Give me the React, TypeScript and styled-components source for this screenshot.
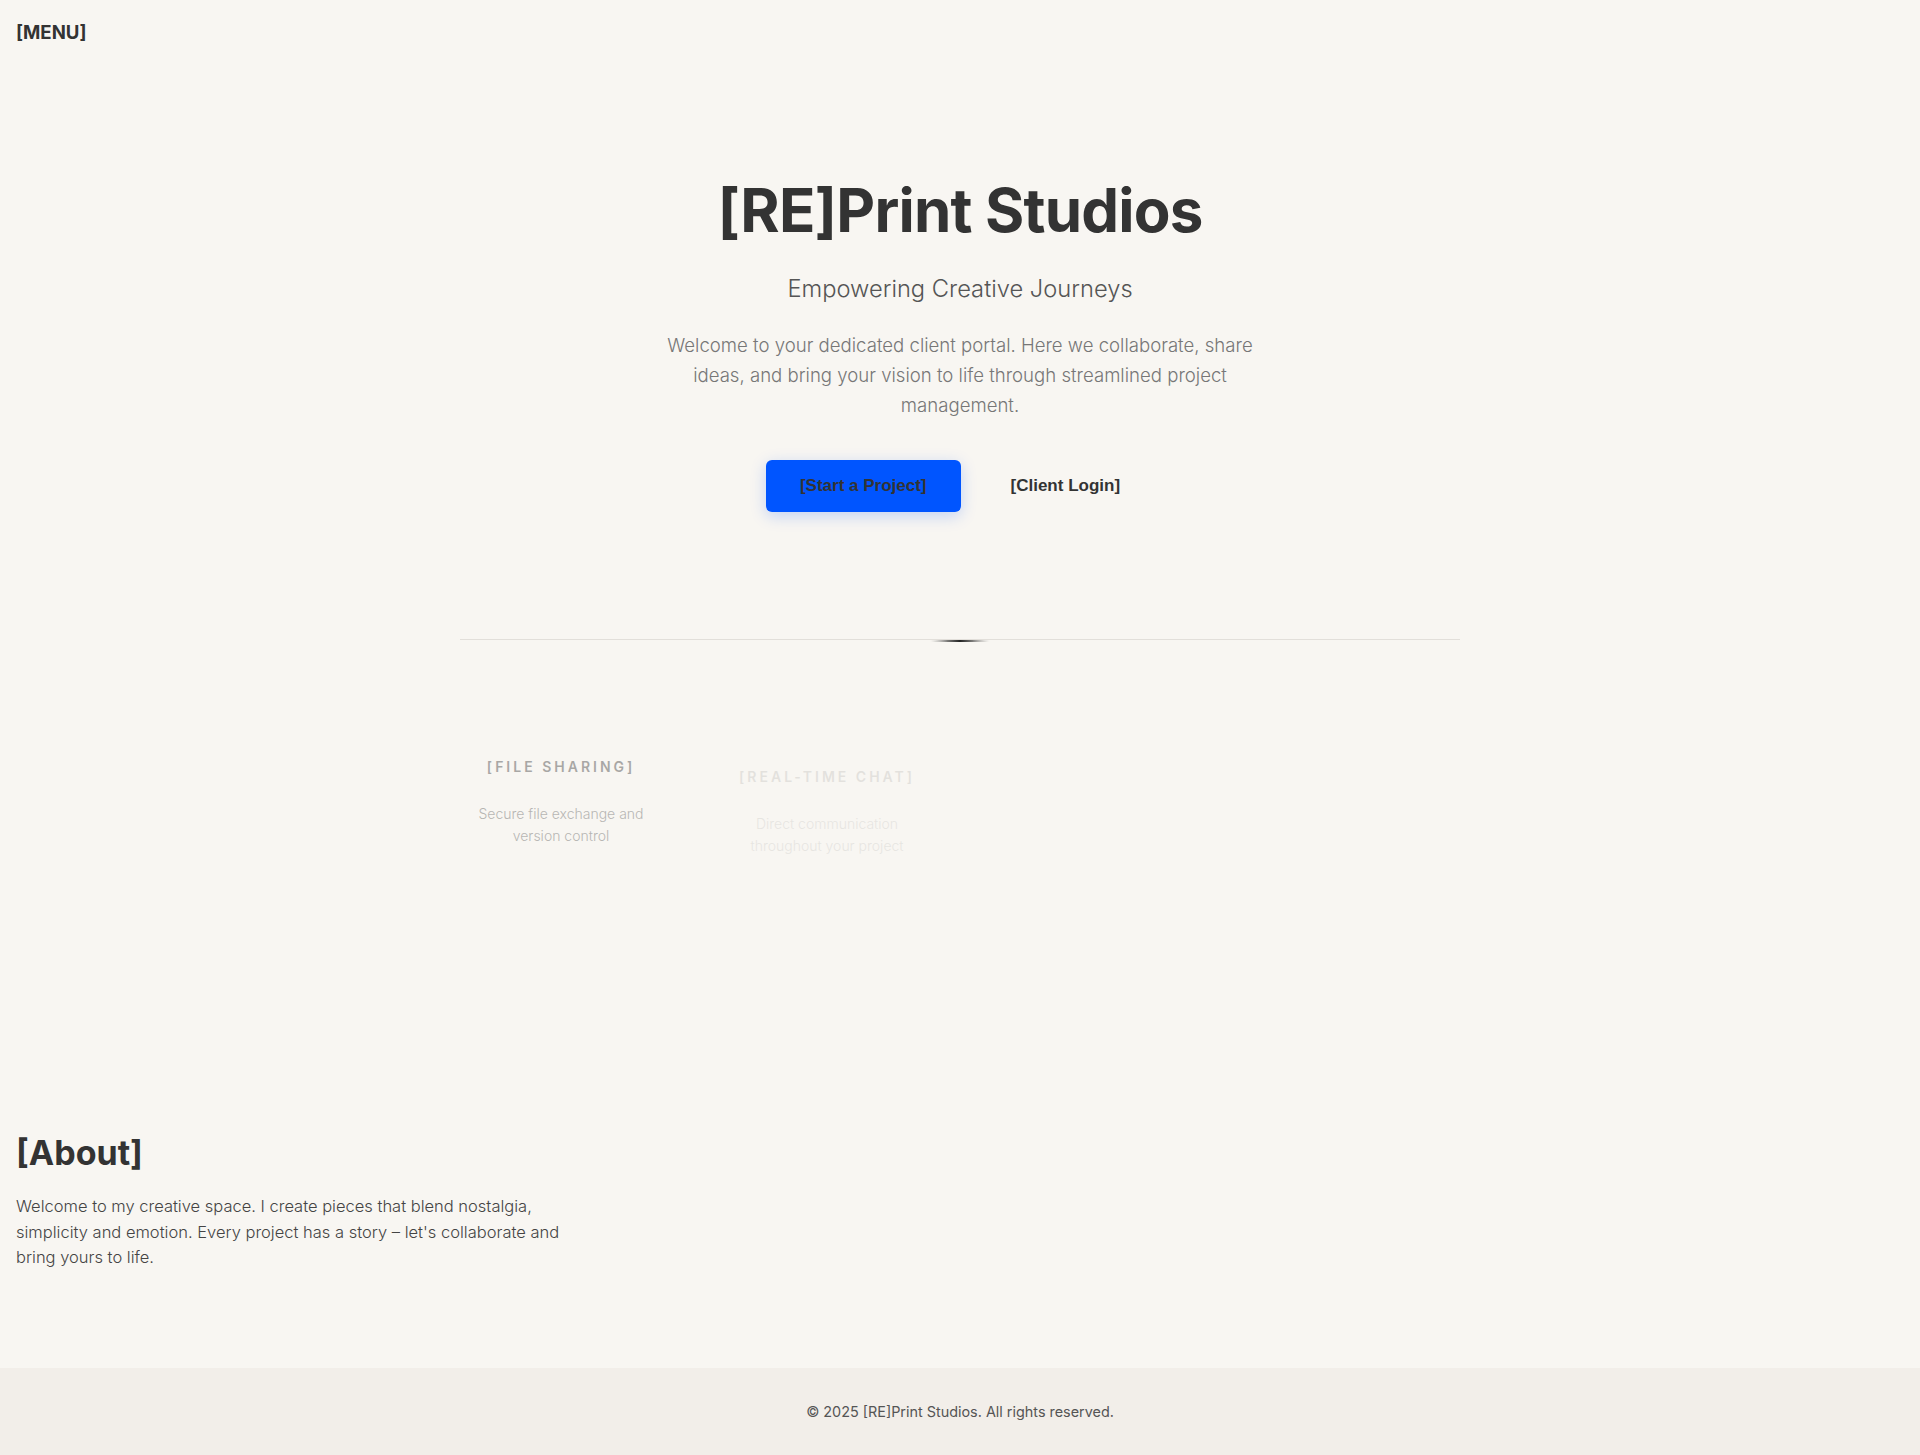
import React from "react";
import styled, { createGlobalStyle } from "styled-components";

const GlobalStyle = createGlobalStyle`
  * { box-sizing: border-box; }
  html, body { margin: 0; padding: 0; }
  body {
    background: #f8f6f2;
    color: #333;
    font-family: "Inter", "Liberation Sans", sans-serif;
  }
`;

const Page = styled.div`
  min-height: 1455px;
  display: flex;
  flex-direction: column;
`;

const Header = styled.header`
  padding: 21px 16px 19px;
  height: 62px;
`;

const MenuButton = styled.button`
  background: none;
  border: none;
  padding: 0;
  font-family: "Inter", sans-serif;
  font-weight: 700;
  font-size: 18.6px;
  line-height: 22px;
  color: #333;
  cursor: pointer;
`;

const Hero = styled.section`
  display: flex;
  flex-direction: column;
  align-items: center;
  text-align: center;
  padding-top: 112px;
`;

const Title = styled.h1`
  margin: 0;
  font-size: 60px;
  line-height: 72px;
  font-weight: 700;
  color: #333;
  letter-spacing: -0.8px;
`;

const Subtitle = styled.h2`
  margin: 27px 0 0;
  font-size: 23.7px;
  line-height: 32px;
  font-weight: 300;
  color: #555;
`;

const Lead = styled.p`
  margin: 25px 0 0;
  max-width: 600px;
  font-size: 18.6px;
  line-height: 30px;
  font-weight: 300;
  color: #777;
`;

const Actions = styled.div`
  display: flex;
  gap: 16px;
  margin-top: 40px;
`;

const ActionButton = styled.button<{ $primary?: boolean }>`
  font-family: "Liberation Sans", Arial, sans-serif;
  font-weight: 700;
  font-size: 17px;
  line-height: 20px;
  padding: 16px 34px;
  border: none;
  border-radius: 6px;
  color: #333;
  cursor: pointer;
  background: ${(p) => (p.$primary ? "#0055ff" : "transparent")};
  box-shadow: ${(p) => (p.$primary ? "0 4px 16px rgba(0, 85, 255, 0.22)" : "none")};
`;

const Divider = styled.div`
  position: relative;
  width: 1000px;
  height: 1px;
  margin: 127px auto 0;
  background: #e2dfda;

  &::after {
    content: "";
    position: absolute;
    left: 50%;
    top: 1px;
    width: 60px;
    height: 2px;
    transform: translateX(-50%);
    border-radius: 50%;
    background: linear-gradient(90deg, rgba(51, 51, 51, 0), #222 50%, rgba(51, 51, 51, 0));
  }
`;

const Features = styled.div`
  width: 1000px;
  margin: 101px auto 0;
  display: grid;
  grid-template-columns: repeat(4, 1fr);
  gap: 64px;
`;

const Feature = styled.div<{ $fade: number; $shift: number }>`
  padding: 16px 12px;
  text-align: center;
  opacity: ${(p) => p.$fade};
  transform: translateY(${(p) => p.$shift}px);
`;

const FeatureTitle = styled.h3`
  margin: 0;
  font-size: 14px;
  line-height: 20px;
  font-weight: 600;
  letter-spacing: 3px;
  text-transform: uppercase;
  color: #333;
`;

const FeatureText = styled.p`
  margin: 26px 0 0;
  font-size: 14px;
  line-height: 22px;
  font-weight: 300;
  color: #555;
`;

const About = styled.section`
  padding: 0 16px;
  margin-top: 268px;
`;

const AboutTitle = styled.h2`
  margin: 0;
  font-size: 34px;
  line-height: 43px;
  font-weight: 700;
  color: #333;
`;

const AboutText = styled.p`
  margin: 20px 0 0;
  max-width: 580px;
  font-size: 16.5px;
  line-height: 25.5px;
  font-weight: 300;
  color: #444;
`;

const Footer = styled.footer`
  margin-top: auto;
  height: 87px;
  background: #f2eee9;
  display: flex;
  align-items: center;
  justify-content: center;
  font-size: 14.4px;
  font-weight: 400;
  color: #555;
`;

const features = [
  { title: "[File Sharing]", text: "Secure file exchange and version control", fade: 0.4, shift: 0 },
  { title: "[Real-time Chat]", text: "Direct communication throughout your project", fade: 0.1, shift: 10 },
];

export default function App() {
  return (
    <>
      <GlobalStyle />
      <Page>
        <Header>
          <MenuButton>[MENU]</MenuButton>
        </Header>
        <Hero>
          <Title>[RE]Print Studios</Title>
          <Subtitle>Empowering Creative Journeys</Subtitle>
          <Lead>
            Welcome to your dedicated client portal. Here we collaborate, share ideas, and bring your
            vision to life through streamlined project management.
          </Lead>
          <Actions>
            <ActionButton $primary>[Start a Project]</ActionButton>
            <ActionButton>[Client Login]</ActionButton>
          </Actions>
        </Hero>
        <Divider />
        <Features>
          {features.map((f) => (
            <Feature key={f.title} $fade={f.fade} $shift={f.shift}>
              <FeatureTitle>{f.title}</FeatureTitle>
              <FeatureText>{f.text}</FeatureText>
            </Feature>
          ))}
        </Features>
        <About>
          <AboutTitle>[About]</AboutTitle>
          <AboutText>
            Welcome to my creative space. I create pieces that blend nostalgia, simplicity and emotion.
            Every project has a story – let's collaborate and bring yours to life.
          </AboutText>
        </About>
        <Footer>© 2025 [RE]Print Studios. All rights reserved.</Footer>
      </Page>
    </>
  );
}
